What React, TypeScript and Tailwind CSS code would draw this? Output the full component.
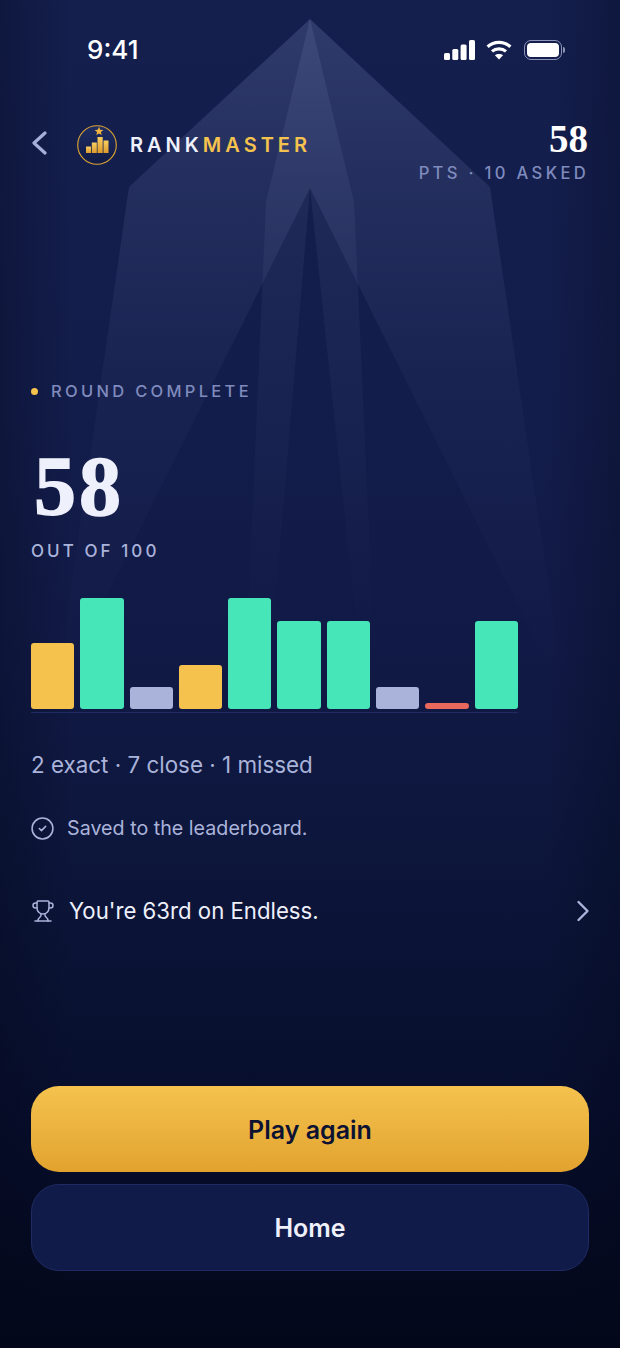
import { ChevronRight, CircleCheck, Trophy } from "lucide-react";

const sans = "font-['Inter','Liberation_Sans',sans-serif]";
const serif = "font-['Liberation_Serif',serif]";

const bars = [
  { h: 66, color: "bg-[#f5c24e]" },
  { h: 111, color: "bg-[#46e6b9]" },
  { h: 22, color: "bg-[#aab3da]" },
  { h: 44, color: "bg-[#f5c24e]" },
  { h: 111, color: "bg-[#46e6b9]" },
  { h: 88, color: "bg-[#46e6b9]" },
  { h: 88, color: "bg-[#46e6b9]" },
  { h: 22, color: "bg-[#aab3da]" },
  { h: 6, color: "bg-[#e8685c]" },
  { h: 88, color: "bg-[#46e6b9]" },
];

function Beams() {
  return (
    <svg className="absolute left-0 top-0" width="620" height="800" viewBox="0 0 620 800" fill="none">
      <defs>
        <linearGradient id="beamOuter" gradientUnits="userSpaceOnUse" x1="0" y1="19" x2="0" y2="680">
          <stop offset="0" stopColor="#8f9dd0" stopOpacity="0.22" />
          <stop offset="0.25" stopColor="#8f9dd0" stopOpacity="0.13" />
          <stop offset="0.55" stopColor="#8f9dd0" stopOpacity="0.045" />
          <stop offset="1" stopColor="#8f9dd0" stopOpacity="0" />
        </linearGradient>
        <linearGradient id="beamInner" gradientUnits="userSpaceOnUse" x1="0" y1="19" x2="0" y2="640">
          <stop offset="0" stopColor="#a3afdc" stopOpacity="0.12" />
          <stop offset="0.35" stopColor="#a3afdc" stopOpacity="0.07" />
          <stop offset="1" stopColor="#a3afdc" stopOpacity="0" />
        </linearGradient>
      </defs>
      <path d="M310 19 L490 187 L565 700 L310 188 L55 700 L129 187 Z" fill="url(#beamOuter)" />
      <path d="M310 19 L354 202 L374 640 L358 640 L310 188 L272 640 L247 640 L266 202 Z" fill="url(#beamInner)" />
    </svg>
  );
}

function Logo() {
  return (
    <svg width="40" height="42" viewBox="0 0 40 42" fill="none">
      <defs>
        <linearGradient id="logoBg" x1="0" y1="0" x2="0" y2="1">
          <stop offset="0" stopColor="#1e2d63" />
          <stop offset="1" stopColor="#101a45" />
        </linearGradient>
        <linearGradient id="logoBar" x1="0" y1="0" x2="0" y2="1">
          <stop offset="0" stopColor="#f8cf62" />
          <stop offset="1" stopColor="#dd9a2a" />
        </linearGradient>
      </defs>
      <circle cx="20" cy="21" r="19.3" fill="url(#logoBg)" stroke="#e0a532" strokeWidth="1.1" />
      <rect x="9" y="22.5" width="5" height="6.5" fill="url(#logoBar)" />
      <rect x="14.8" y="18.5" width="5" height="10.5" fill="url(#logoBar)" />
      <rect x="20.5" y="13" width="5.2" height="16" fill="url(#logoBar)" />
      <rect x="26.5" y="16.5" width="5" height="12.5" fill="url(#logoBar)" />
      <path d="M22 2.8 L23.2 5.8 L26.4 6 L23.9 8 L24.7 11.1 L22 9.4 L19.3 11.1 L20.1 8 L17.6 6 L20.8 5.8 Z" fill="#f2b53f" />
    </svg>
  );
}

function StatusIcons() {
  return (
    <div className="flex items-center gap-[11px]">
      <svg width="31" height="20" viewBox="0 0 31 20" fill="#ffffff">
        <rect x="0" y="13" width="6" height="7" rx="1.5" />
        <rect x="8.3" y="9" width="6" height="11" rx="1.5" />
        <rect x="16.6" y="4.5" width="6" height="15.5" rx="1.5" />
        <rect x="25" y="0" width="6" height="20" rx="1.5" />
      </svg>
      <svg width="26" height="20" viewBox="0 0 26 20" fill="none" stroke="#ffffff" strokeWidth="3.2">
        <path d="M1.6 6.8 C8 1 18 1 24.4 6.8" />
        <path d="M6 11.4 C10 8 16 8 20 11.4" />
        <path d="M13 19.5 L8.9 15.3 C11 13.6 15 13.6 17.1 15.3 Z" fill="#ffffff" stroke="none" />
      </svg>
      <div className="flex items-center gap-[1px] ml-[1px]">
        <div className="w-[38px] h-[20px] rounded-[7px] border-[1.5px] border-[#8d94b8] p-[2px]">
          <div className="w-full h-full rounded-[4px] bg-white" />
        </div>
        <div className="w-[2px] h-[6px] rounded-r-full bg-[#8d94b8]" />
      </div>
    </div>
  );
}

export default function App() {
  return (
    <div className={`${sans} relative w-[620px] h-[1348px] overflow-hidden bg-[linear-gradient(90deg,rgba(3,7,25,0.3),rgba(3,7,25,0)_12%,rgba(3,7,25,0)_88%,rgba(3,7,25,0.3)),linear-gradient(180deg,#141f4e_0%,#131d4b_30%,#111a46_48%,#0c1539_66%,#070e2c_83%,#030719_100%)]`}>
      <Beams />

      <div className="relative flex flex-col h-full px-[31px]">
        {/* Status bar */}
        <div className="flex items-center justify-between h-[20px] mt-[40px] pl-[56px] pr-[24px]">
          <span className="text-[26px] font-medium leading-none text-white">9:41</span>
          <StatusIcons />
        </div>

        {/* Header */}
        <div className="flex items-start justify-between mt-[62px]">
          <div className="flex items-center mt-[2px]">
            <svg className="mb-[4px]" width="16" height="26" viewBox="0 0 16 26" fill="none" stroke="#a5afd9" strokeWidth="3.2" strokeLinecap="round" strokeLinejoin="round">
              <path d="M14 3 L3 13 L14 23" />
            </svg>
            <div className="ml-[30px]">
              <Logo />
            </div>
            <span className="ml-[13px] text-[20px] font-semibold tracking-[4px] text-[#eef0fb]">
              RANK<span className="text-[#f5c24e]">MASTER</span>
            </span>
          </div>
          <div className="flex flex-col items-end">
            <span className={`${serif} text-[39px] font-bold leading-[36px] text-white mt-[-1px] mr-[1px]`}>58</span>
            <span className="mt-[5px] text-[16.6px] font-medium leading-[22px] tracking-[0.2em] text-[#7f8bbd]">PTS · 10 ASKED</span>
          </div>
        </div>

        {/* Round summary */}
        <div className="flex items-center mt-[196px]">
          <div className="w-[7px] h-[7px] rounded-full bg-[#f5c24e]" />
          <span className="ml-[13px] text-[16.5px] font-medium leading-[22px] tracking-[0.2em] text-[#7f8bbd]">ROUND COMPLETE</span>
        </div>
        <div className={`${serif} mt-[41px] text-[84px] font-bold leading-[88px] tracking-[3px] text-[#eef0fb] [-webkit-text-stroke:1.5px_#eef0fb] ml-[3px] h-[90px]`}>58</div>
        <div className="mt-[7px] text-[17px] font-medium leading-[22px] tracking-[0.18em] text-[#aab3da]">OUT OF 100</div>

        {/* Score bars */}
        <div className="w-[487px] mt-[36px]">
          <div className="flex items-end gap-[6px] h-[111px]">
            {bars.map((bar, i) => (
              <div key={i} className={`flex-1 rounded-[3px] ${bar.color}`} style={{ height: bar.h }} />
            ))}
          </div>
          <div className="mt-[3px] h-[1px] bg-[#1f2b62]" />
        </div>

        <div className="mt-[38px] text-[22.4px] leading-[28px] text-[#aab3da]">2 exact · 7 close · 1 missed</div>

        <div className="flex items-center mt-[35px]">
          <CircleCheck className="w-[25px] h-[25px] -ml-[1px] text-[#aab3da]" strokeWidth={1.5} />
          <span className="ml-[12px] text-[19.7px] leading-[28px] text-[#aab3da]">Saved to the leaderboard.</span>
        </div>

        <div className="flex items-center justify-between mt-[55px] h-[28px]">
          <div className="flex items-center">
            <Trophy className="w-[24px] h-[24px] text-[#aab3da]" strokeWidth={1.5} />
            <span className="ml-[14px] text-[22.2px] leading-[28px] text-[#eef0fb]">You're 63rd on Endless.</span>
          </div>
          <ChevronRight className="w-[36px] h-[36px] mr-[-12px] text-[#aab3da]" strokeWidth={1.6} />
        </div>

        {/* Actions */}
        <div className="flex flex-col gap-[12px] mt-auto mb-[77px]">
          <button className="h-[86px] pt-[3px] rounded-[28px] bg-gradient-to-b from-[#f5c24e] to-[#e2a32e] text-[25px] font-semibold text-[#0d1233]">
            Play again
          </button>
          <button className="h-[87px] pt-[2px] rounded-[28px] border border-[#1f2b62] bg-[#101b4a] text-[25px] font-semibold text-[#eef0fb]">
            Home
          </button>
        </div>
      </div>
    </div>
  );
}
